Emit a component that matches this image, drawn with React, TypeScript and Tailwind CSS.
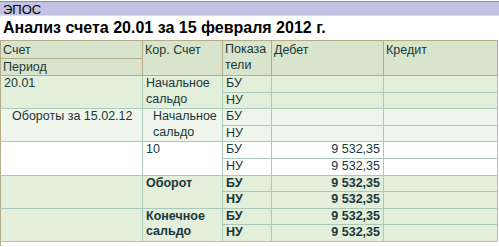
const groups = [
  { acc: "20.01", kor: ["Начальное", "сальдо"], bg: "bg-[#e3eedb]", accPad: "pl-[3px]", korPad: "pl-[3px]", bold: false, vals: ["", ""] },
  { acc: "Обороты за 15.02.12", kor: ["Начальное", "сальдо"], bg: "bg-[#eff5ea]", accPad: "pl-[11px]", korPad: "pl-[10px]", bold: false, vals: ["", ""] },
  { acc: "", kor: ["10"], bg: "bg-white", accPad: "pl-[3px]", korPad: "pl-[3px]", bold: false, vals: ["9 532,35", "9 532,35"] },
  { acc: "", kor: ["Оборот"], bg: "bg-[#e3eedb]", accPad: "pl-[3px]", korPad: "pl-[3px]", bold: true, vals: ["9 532,35", "9 532,35"] },
  { acc: "", kor: ["Конечное", "сальдо"], bg: "bg-[#e3eedb]", accPad: "pl-[3px]", korPad: "pl-[3px]", bold: true, vals: ["9 532,35", "9 532,35"] },
];

const cell = "border border-[#a9c9bb] align-top leading-[15.6px] p-0";
const head = "border border-[#b4ad88] align-top leading-[16px] p-0 pl-[2px] font-normal text-left";

export default function App() {
  return (
    <div className="w-[499px] h-[247px] bg-white overflow-hidden text-[#18383a]" style={{ fontFamily: '"Liberation Sans", Arial, sans-serif' }}>
      <div className="mt-[1px] border-t border-[#8c8cb0] bg-[#c2c2e2] h-[15px] pl-[3px] text-[13px] leading-[15px] text-black border-b border-b-[#dcdcf0]">
        ЭПОС
      </div>
      <div className="h-[24px] pl-[3px] pt-[2px] text-[16px] leading-[20px] font-bold text-black">
        Анализ счета 20.01 за 15 февраля 2012 г.
      </div>
      <div className="border-l border-[#b4ad88] h-[206px]">
        <table className="border-collapse text-[12.5px] table-fixed w-[497px] -ml-[1px]">
          <colgroup>
            <col className="w-[142px]" />
            <col className="w-[80px]" />
            <col className="w-[49px]" />
            <col className="w-[112px]" />
            <col className="w-[114px]" />
          </colgroup>
          <thead>
            <tr className="bg-[#d9e4cc] h-[16px]">
              <th className={`${head} pt-[1px]`}>Счет</th>
              <th rowSpan={2} className={`${head} pt-[1px]`}>Кор. Счет</th>
              <th rowSpan={2} className={`${head} break-all leading-[15.5px]`}>Показатели</th>
              <th rowSpan={2} className={`${head} pt-[1px]`}>Дебет</th>
              <th rowSpan={2} className={`${head} pt-[1px]`}>Кредит</th>
            </tr>
            <tr className="bg-[#d9e4cc] h-[16px]">
              <th className={`${head} leading-[15.5px]`}>Период</th>
            </tr>
          </thead>
          <tbody>
            {groups.map((g, gi) =>
              [0, 1].map((r) => (
                <tr key={`${gi}-${r}`} className={`${g.bg} h-[15.6px]`}>
                  {r === 0 && (
                    <td rowSpan={2} className={`${cell} ${g.accPad} border-l-[#b4ad88]`}>
                      {g.acc}
                    </td>
                  )}
                  {r === 0 && (
                    <td rowSpan={2} className={`${cell} ${g.korPad} ${g.bold ? "font-bold" : ""}`}>
                      {g.kor.map((k) => (
                        <div key={k}>{k}</div>
                      ))}
                    </td>
                  )}
                  <td className={`${cell} pl-[3px] ${g.bold ? "font-bold" : ""}`}>{r === 0 ? "БУ" : "НУ"}</td>
                  <td className={`${cell} pr-[3px] text-right ${g.bold ? "font-bold" : ""}`}>{g.vals[r]}</td>
                  <td className={cell}></td>
                </tr>
              ))
            )}
          </tbody>
        </table>
      </div>
    </div>
  );
}
